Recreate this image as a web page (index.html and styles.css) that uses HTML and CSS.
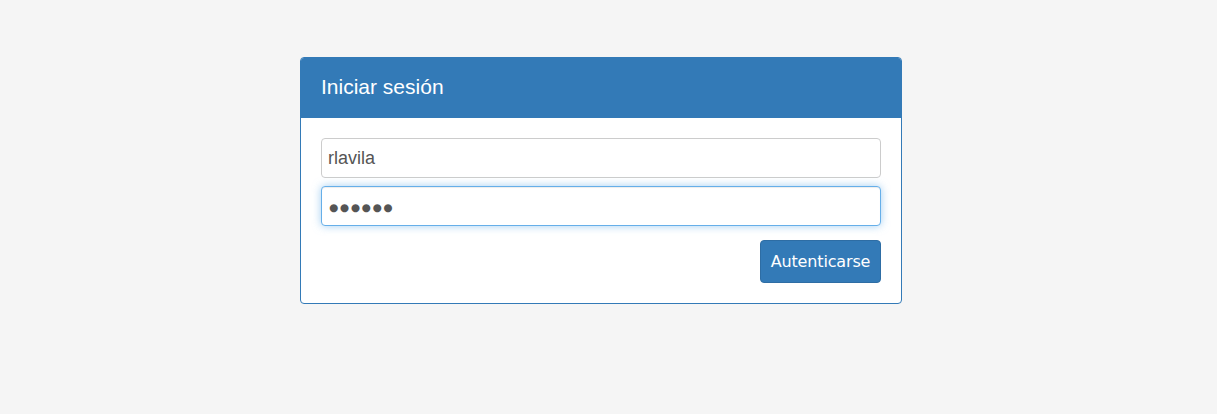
FILE: index.html
```html
<!DOCTYPE html>
<html lang="es">
<head>
<meta charset="utf-8">
<title>Iniciar sesión</title>
<link rel="stylesheet" href="styles.css">
</head>
<body>
<div class="page">
  <div class="panel">
    <div class="panel-heading">Iniciar sesión</div>
    <div class="panel-body">
      <input class="field" type="text" value="rlavila">
      <input class="field focus dots" type="text" value="●●●●●●" aria-label="Contraseña">
      <div class="actions">
        <button class="btn" type="button">Autenticarse</button>
      </div>
    </div>
  </div>
</div>
</body>
</html>
```

FILE: styles.css
```css
html, body {
  margin: 0;
  padding: 0;
  background: #f5f5f5;
  font-family: "Liberation Sans", Arial, sans-serif;
}
.page {
  padding: 57px 0 0 300px;
}
.panel {
  width: 600px;
  border: 1px solid #337ab7;
  border-radius: 4px;
  background: #fff;
  overflow: hidden;
}
.panel-heading {
  background: #337ab7;
  color: #fff;
  height: 60px;
  box-sizing: border-box;
  padding: 18px 20px 0 20px;
  font-size: 21px;
  line-height: 22px;
}
.panel-body {
  padding: 20px;
  display: flex;
  flex-direction: column;
  gap: 8px;
}
.field {
  display: block;
  box-sizing: border-box;
  width: 560px;
  height: 40px;
  margin: 0;
  padding: 0 6px;
  border: 1px solid #ccc;
  border-radius: 4px;
  font-family: "Liberation Sans", Arial, sans-serif;
  font-size: 18px;
  color: #555;
  background: #fff;
  outline: none;
}
.field.focus {
  border-color: #66afe9;
  box-shadow: inset 0 1px 1px rgba(0,0,0,.075), 0 0 8px rgba(102,175,233,.6);
}
.field.dots {
  font-family: "DejaVu Sans", sans-serif;
  font-size: 10.5px;
  letter-spacing: 1.7px;
  padding-left: 7px;
  padding-top: 2px;
}
.actions {
  display: flex;
  justify-content: flex-end;
  padding-top: 6px;
}
.btn {
  box-sizing: border-box;
  height: 43px;
  width: 121px;
  padding: 0 8px;
  border: 1px solid #2e6da4;
  border-radius: 4px;
  background: #337ab7;
  color: #fff;
  font-family: "DejaVu Sans", Verdana, sans-serif;
  font-size: 16px;
  letter-spacing: -0.15px;
  cursor: pointer;
}
```
